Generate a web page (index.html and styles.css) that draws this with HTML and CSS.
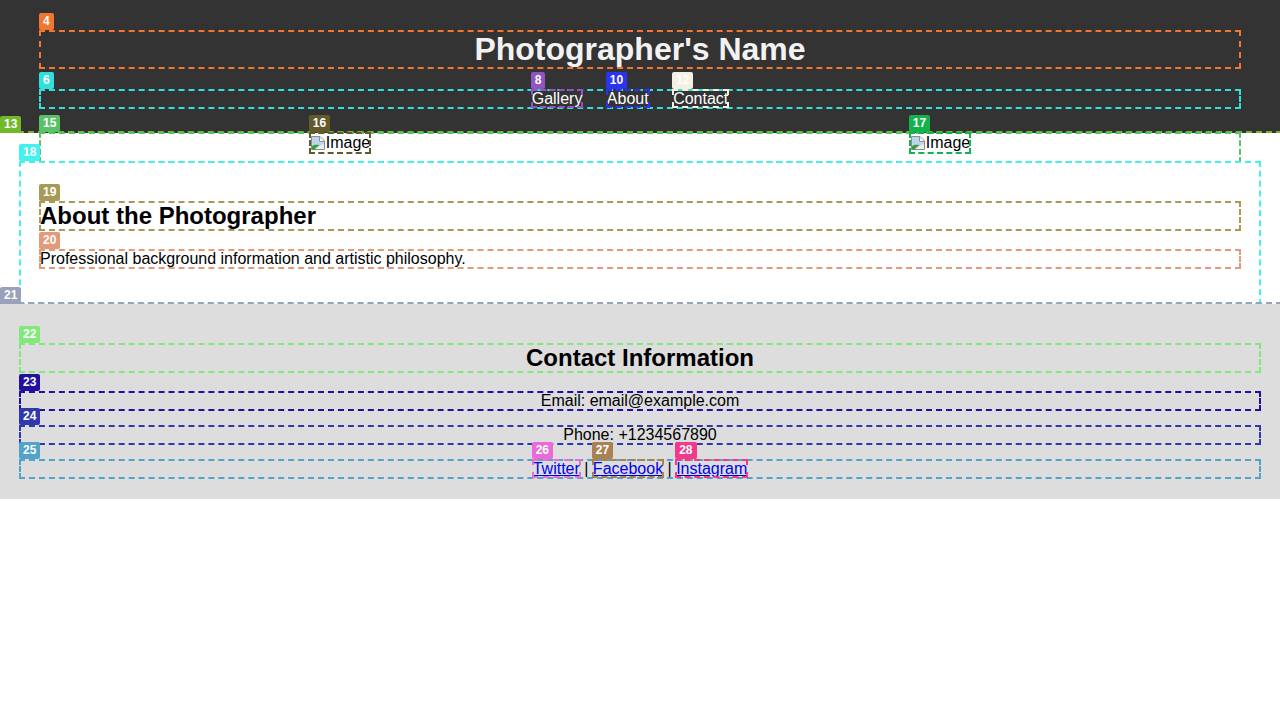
FILE: index.html
```html
<!DOCTYPE html>
<html lang="en">
<head>
<meta charset="utf-8">
<title>Photographer's Portfolio</title>
<link rel="stylesheet" href="styles.css">
</head>
<body>
<header class="site-header">
  <h1 class="title ann k4">Photographer's Name<span class="tag">4</span></h1>
  <nav class="nav ann k6"><span class="tag">6</span>
    <ul class="nav-list">
      <li class="nav-item"><a class="nav-link ann k8" href="#gallery">Gallery<span class="tag">8</span></a></li>
      <li class="nav-item"><a class="nav-link ann k10" href="#about">About<span class="tag">10</span></a></li>
      <li class="nav-item"><a class="nav-link ann k12" href="#contact">Contact<span class="tag">12</span></a></li>
    </ul>
  </nav>
</header>
<main class="main ann ann-out k13"><span class="tag tag-edge">13</span>
  <section class="gallery ann k15" id="gallery"><span class="tag">15</span>
    <div class="cell">
      <span class="broken ann k16"><span class="tag">16</span><svg class="broken-icon" width="16" height="16" viewBox="0 0 16 16" aria-hidden="true"><path d="M1.5 1.5h8.5l4.5 4.5v8.5h-13z" fill="#e9eef3" stroke="#8c8c8c"/><path d="M2 2h7.6v4.4H14V9L2 14z" fill="#bcd6ef"/><path d="M2 14.5V11.2C4 9.8 6.5 9.4 9.4 10L4.4 14.5z" fill="#3c9c3c"/><path d="M9.6 1.8v4.6h4.6" fill="#fff" stroke="#8c8c8c"/></svg>Image</span>
    </div>
    <div class="cell">
      <span class="broken ann k17"><span class="tag">17</span><svg class="broken-icon" width="16" height="16" viewBox="0 0 16 16" aria-hidden="true"><path d="M1.5 1.5h8.5l4.5 4.5v8.5h-13z" fill="#e9eef3" stroke="#8c8c8c"/><path d="M2 2h7.6v4.4H14V9L2 14z" fill="#bcd6ef"/><path d="M2 14.5V11.2C4 9.8 6.5 9.4 9.4 10L4.4 14.5z" fill="#3c9c3c"/><path d="M9.6 1.8v4.6h4.6" fill="#fff" stroke="#8c8c8c"/></svg>Image</span>
    </div>
  </section>
  <section class="about ann k18" id="about"><span class="tag">18</span>
    <h2 class="about-title ann k19">About the Photographer<span class="tag">19</span></h2>
    <p class="about-text ann k20">Professional background information and artistic philosophy.<span class="tag">20</span></p>
  </section>
</main>
<footer class="footer ann ann-out k21" id="contact"><span class="tag tag-edge">21</span>
  <h2 class="footer-title ann k22">Contact Information<span class="tag">22</span></h2>
  <p class="footer-line ann k23">Email: email@example.com<span class="tag">23</span></p>
  <p class="footer-line ann k24">Phone: +1234567890<span class="tag">24</span></p>
  <div class="social ann k25"><span class="tag">25</span><a class="social-link ann k26" href="#">Twitter<span class="tag">26</span></a> | <a class="social-link ann k27" href="#">Facebook<span class="tag">27</span></a> | <a class="social-link ann k28" href="#">Instagram<span class="tag">28</span></a></div>
</footer>
</body>
</html>
```
FILE: styles.css
```css
html, body {
  margin: 0;
  padding: 0;
  background: #fff;
}

body {
  font-family: "Liberation Sans", Arial, Helvetica, sans-serif;
  font-size: 16px;
  color: #000;
}

/* annotation overlay */
.ann {
  position: relative;
  outline: 2px dashed var(--k);
  outline-offset: -1px;
}

.ann-out {
  outline-offset: 0;
}

.tag {
  position: absolute;
  left: -1px;
  bottom: calc(100% + 1px);
  height: 17px;
  padding: 0 4px;
  background: var(--k);
  color: #fff;
  font-family: "Liberation Sans", Arial, sans-serif;
  font-size: 12px;
  font-weight: bold;
  line-height: 17px;
  border-radius: 2px;
  text-decoration: none;
  text-align: left;
  white-space: nowrap;
  z-index: 5;
}

.tag-edge {
  left: 0;
  bottom: 0;
}

.k4 { --k: #f07632; }
.k6 { --k: #2fe0dc; }
.k8 { --k: #8f55c2; }
.k10 { --k: #2a34ee; }
.k12 { --k: #f8efe3; }
.k13 { --k: #72b82a; }
.k15 { --k: #58c267; }
.k16 { --k: #625a2a; }
.k17 { --k: #12b24c; }
.k18 { --k: #42f2ee; }
.k19 { --k: #a89a56; }
.k20 { --k: #e29a78; }
.k21 { --k: #98a2ba; }
.k22 { --k: #82e87a; }
.k23 { --k: #22119e; }
.k24 { --k: #3038ae; }
.k25 { --k: #52a2ca; }
.k26 { --k: #ea6ad8; }
.k27 { --k: #a98152; }
.k28 { --k: #f2398a; }

.main > .tag-edge,
.footer > .tag-edge {
  bottom: 100%;
}

/* header */
.site-header {
  background: #333;
  color: #fff;
  padding: 10px 40px 9px;
}

.title {
  margin: 21.44px 0;
  font-size: 32px;
  font-weight: bold;
  text-align: center;
  color: #f2f2f2;
}

.nav-list {
  margin: 16px 0;
  padding: 0;
  list-style: none;
  text-align: center;
}

.nav-item {
  display: inline;
  margin-right: 20px;
}

.nav-link {
  color: #fff;
  text-decoration: none;
}

/* main */
.main {
  display: block;
  padding: 0 20px;
}

.gallery {
  margin: 0 20px;
  padding-bottom: 9px;
  display: grid;
  grid-template-columns: 1fr 1fr;
}

.cell {
  display: flex;
  justify-content: center;
}

.broken {
  display: inline-flex;
  align-items: center;
  height: 20px;
  line-height: 20px;
}

.broken-icon {
  display: block;
  flex: none;
}

.about {
  padding: 20px;
}

.about-title {
  font-size: 24px;
  margin: 19.92px 0;
}

.about-text {
  margin: 16px 0;
}

/* footer */
.footer {
  background: #ddd;
  padding: 20px 20px 21.5px;
  text-align: center;
}

.footer-title {
  font-size: 24px;
  margin: 19.92px 0;
}

.footer-line {
  margin: 16px 0;
}

.social-link {
  color: #0000ee;
  text-decoration: underline;
}
```
